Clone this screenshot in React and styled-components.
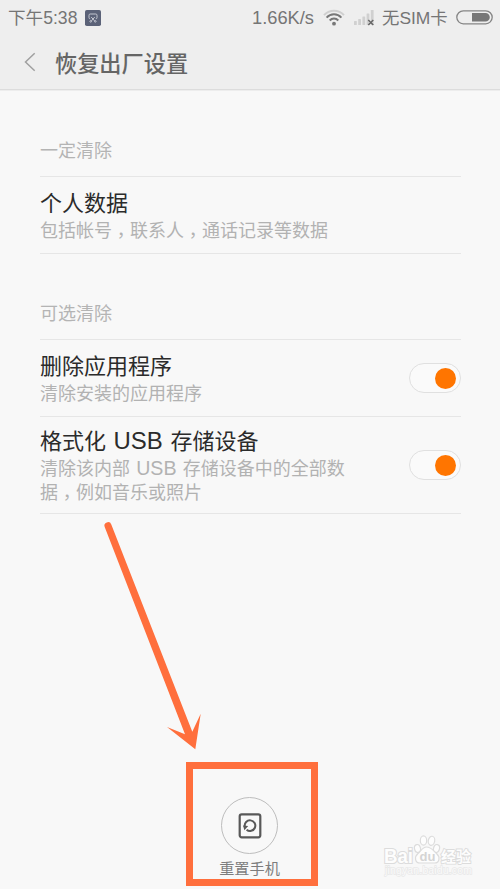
import React from "react";
import styled, { createGlobalStyle } from "styled-components";

const sections = [
	{
		label: "一定清除",
		items: [{ title: ["个人数据"], text: ["包括帐号", "，", "联系人", "，", "通话记录等数据"] }],
	},
	{
		label: "可选清除",
		items: [
			{ title: ["删除应用程序"], text: ["清除安装的应用程序"], toggle: true },
			{
				title: ["格式化 ", "USB", " 存储设备"],
				text: ["清除该内部 ", "USB", " 存储设备中的全部数", "据", "，", "例如音乐或照片"],
				toggle: true,
			},
		],
	},
];

function StatusBar() {
	return (
		<StatusStyles>
			<span className="time">下午5:38</span>
			<svg className="app" width="16" height="16" viewBox="0 0 16 16">
				<rect width="16" height="16" rx="1.800" fill="#5b6278" />
				<g fill="none" stroke="#c3c6d0" strokeWidth="1">
					<path d="M5.200 8.800A1.200 1.200 0 0 1 4 7.600V5.200A1.200 1.200 0 0 1 5.200 4h5.600A1.200 1.200 0 0 1 12 5.200v2.400a1.200 1.200 0 0 1-1.200 1.200" />
					<path d="M6.200 7l3.400 3.900M9.800 7l-3.400 3.900" />
					<circle cx="5.700" cy="11.400" r=".8" />
					<circle cx="10.300" cy="11.400" r=".8" />
				</g>
			</svg>
			<span className="speed">1.66K/s</span>
			<svg className="wifi" width="22" height="18" viewBox="0 0 22 18">
				<g fill="none" strokeWidth="1.900">
					<path d="M1 6.100C6.300 .2 15.700 .2 21 6.100" stroke="#cfcfcf" />
					<path d="M3.600 8.600C7.700 4.100 14.300 4.100 18.400 8.600" stroke="#777" />
					<path d="M6.700 11.500C9.100 8.900 12.900 8.900 15.300 11.500" stroke="#777" />
				</g>
				<circle cx="11" cy="14.700" r="1.900" fill="#777" />
			</svg>
			<svg className="signal" width="21" height="17" viewBox="0 0 21 17">
				<g fill="#d0d0d0">
					<rect x="0" y="12" width="2.800" height="4" rx=".6" />
					<rect x="4.200" y="10" width="2.800" height="6" rx=".6" />
					<rect x="8.400" y="7.500" width="2.800" height="8.500" rx=".6" />
					<rect x="12.600" y="4.500" width="2.800" height="11.500" rx=".6" />
					<rect x="16.800" y="1" width="2.800" height="15" rx=".6" />
				</g>
				<path d="M14.300 11l5 5M19.300 11l-5 5" stroke="#666" strokeWidth="1.500" />
			</svg>
			<span className="sim">无SIM卡</span>
			<svg className="battery" width="37" height="15" viewBox="0 0 37 15">
				<rect x=".8" y=".8" width="35.400" height="13" rx="6.500" fill="none" stroke="#858585" strokeWidth="1.300" />
				<path d="M16 3h13.500a4.300 4.300 0 0 1 0 8.600H16z" fill="#777" />
			</svg>
		</StatusStyles>
	);
}

// Latin words and commas sit a little differently from the Chinese text
function Mixed({ parts }) {
	return parts.map((part, i) => {
		if (part === "USB") return <Latin key={i}>{part}</Latin>;
		if (part === "，") return <Comma key={i}>{part}</Comma>;
		return <React.Fragment key={i}>{part}</React.Fragment>;
	});
}

function Item({ title, text, toggle }) {
	return (
		<ItemStyles>
			<div className="copy">
				<h2>
					<Mixed parts={title} />
				</h2>
				<p>
					<Mixed parts={text} />
				</p>
			</div>
			{toggle && (
				<Toggle role="switch" aria-checked="true">
					<span />
				</Toggle>
			)}
		</ItemStyles>
	);
}

function Watermark() {
	return (
		<WatermarkStyles>
			<svg width="92" height="46" viewBox="0 0 92 46">
				<g fill="#fdfdfd" stroke="#dcdcdc" strokeWidth="1.200">
					<ellipse cx="34.500" cy="15.500" rx="3" ry="4" transform="rotate(-12 34.500 15.500)" />
					<ellipse cx="40.500" cy="7.500" rx="3.200" ry="4.600" />
					<ellipse cx="48.500" cy="7.800" rx="3.200" ry="4.600" transform="rotate(10 48.500 7.800)" />
					<ellipse cx="53.500" cy="15.500" rx="3" ry="4" transform="rotate(14 53.500 15.500)" />
					<path d="M43.500 14c-4 0-5.500 4-8.500 6.500-4 3.500-3 9.500 2 9.500h14.500c5 0 6-6 2-9.500-3-2.500-5-6.500-10-6.500z" />
				</g>
				<g fontFamily="'Liberation Sans', 'Noto Sans CJK SC', sans-serif" fontWeight="700" paintOrder="stroke" strokeWidth="2.200" stroke="#dcdcdc" fill="#fdfdfd">
					<text x="1" y="29.500" fontSize="20" textLength="29" lengthAdjust="spacingAndGlyphs">Bai</text>
					<text x="36.500" y="28" fontSize="13" stroke="none" fill="#d4d4d4">du</text>
					<text x="58" y="28.500" fontSize="15" textLength="30" strokeWidth="1.800">经验</text>
				</g>
				<text x="2" y="41" fontFamily="'Liberation Sans', sans-serif" fontSize="10.500" textLength="87" fill="#fafafa" stroke="#e8e8e8" strokeWidth="1.400" paintOrder="stroke">
					jingyan.baidu.com
				</text>
			</svg>
		</WatermarkStyles>
	);
}

export default function App() {
	return (
		<Screen>
			<GlobalStyle />
			<Header>
				<StatusBar />
				<div className="title">
					<svg width="12" height="20" viewBox="0 0 12 20">
						<path d="M10.700 1.200L1.500 10l9.200 8.800" fill="none" stroke="#a0a0a0" strokeWidth="1.500" />
					</svg>
					<h1>恢复出厂设置</h1>
				</div>
			</Header>
			<main>
				{sections.map((section) => (
					<Section key={section.label}>
						<h3>{section.label}</h3>
						{section.items.map((item) => (
							<Item key={item.title[0]} {...item} />
						))}
					</Section>
				))}
			</main>
			<Footer>
				<ResetButton>
					<span className="circle">
						<svg width="24" height="26" viewBox="0 0 24 26">
							<rect x="1.700" y="1.300" width="20.600" height="23" rx="2" fill="none" stroke="#585858" strokeWidth="2.200" />
							<path d="M8.600 16.700A5.300 5.300 0 1 0 6.800 13.600" fill="none" stroke="#585858" strokeWidth="2" />
							<path d="M5 12.500l5.200.5-3.800 4.200z" fill="#585858" />
						</svg>
					</span>
					重置手机
				</ResetButton>
			</Footer>
			<Watermark />
			<Marker />
			<Arrow width="101" height="230" viewBox="0 0 101 230">
				<path d="M4.700 7a3.500 3.500 0 0 1 6.600-2.500l81 207.200 8.400-18-5.400 35.600L67 207l18 7.300z" />
			</Arrow>
		</Screen>
	);
}

const GlobalStyle = createGlobalStyle`
	* {
		box-sizing: border-box;
	}

	body {
		margin: 0;
		background: #f8f8f8;
		font-family: "Liberation Sans", "Noto Sans CJK SC", sans-serif;
	}

	h1, h2, h3, p {
		margin: 0;
		font-weight: 400;
	}

	svg {
		display: block;
		flex: none;
	}
`;

const Screen = styled.div`
	position: relative;
	display: flex;
	flex-direction: column;
	height: 889px;
	overflow: hidden;
	background: #f8f8f8;
`;

const Header = styled.header`
	height: 90px;
	margin-bottom: 1px;
	background: #eee;
	border-bottom: 1px solid #dcdcdc;
	box-shadow: 0 1px #ededed;

	.title {
		display: flex;
		align-items: center;
		height: 54px;
		padding-left: 24px;
	}

	h1 {
		margin-left: 19px;
		padding-top: 5px;
		font-size: 22.2px;
		font-weight: 500;
		line-height: 32px;
		color: #656565;
	}
`;

const StatusStyles = styled.div`
	display: flex;
	align-items: center;
	height: 35px;
	padding: 0 7px 0 8px;
	font-size: 18px;
	line-height: 26px;
	white-space: nowrap;
	color: #757575;

	.time {
		width: 70px;
		padding-top: 1px;
		font-size: 17.6px;
	}

	.app {
		margin-left: 7px;
	}

	.speed {
		margin-left: auto;
		padding-top: 1px;
		font-size: 18.3px;
	}

	.wifi {
		margin-left: 9px;
	}

	.signal {
		margin-left: 9px;
	}

	.sim {
		width: 67px;
		margin-left: 7px;
		padding-top: 1px;
		font-size: 17.4px;
	}

	.battery {
		margin-left: 7px;
	}
`;

const Section = styled.section`
	margin: 0 39px 0 40px;

	h3 {
		height: 86px;
		padding: 48px 0 0;
		font-size: 18px;
		line-height: 24px;
		color: #b4b4b4;
		border-bottom: 1px solid #e6e6e6;
	}
`;

const ItemStyles = styled.div`
	display: flex;
	align-items: center;
	justify-content: space-between;
	min-height: 77px;
	padding: 11px 0 8px;
	border-bottom: 1px solid #e6e6e6;

	.copy {
		width: 310px;
	}

	h2 {
		font-size: 22px;
		line-height: 28px;
		color: #2b2b2b;
	}

	p {
		margin-top: 1px;
		font-size: 18px;
		line-height: 24px;
		color: #b2b2b2;
	}
`;

const Latin = styled.span`
	margin: 0 0.06em;
	font-size: 1.09em;
	line-height: 1;
`;

const Comma = styled.span`
	font-family: "Noto Sans CJK TC", sans-serif;
	line-height: 0;
	vertical-align: -5px;
`;

const Toggle = styled.div`
	display: flex;
	align-items: center;
	justify-content: flex-end;
	width: 52px;
	height: 30px;
	margin-bottom: 3px;
	padding-right: 4px;
	border: 1px solid #e0e0e0;
	border-radius: 15px;
	background: #fafafa;

	span {
		width: 21px;
		height: 21px;
		border-radius: 50%;
		background: #ff7500;
	}
`;

const Footer = styled.footer`
	display: flex;
	justify-content: center;
	margin-top: auto;
	padding: 0 1px 10px 0;
`;

const ResetButton = styled.button`
	display: flex;
	flex-direction: column;
	align-items: center;
	padding: 0;
	border: 0;
	background: none;
	font: 15.2px/24px "Noto Sans CJK SC", sans-serif;
	color: #7d7d7d;

	.circle {
		display: flex;
		align-items: center;
		justify-content: center;
		width: 57px;
		height: 57px;
		margin-bottom: 1px;
		border: 1px solid #bdbdbd;
		border-radius: 50%;
	}
`;

/* Overlays drawn on top of the screen */
const Marker = styled.div`
	position: absolute;
	left: 186px;
	top: 762px;
	width: 132px;
	height: 124px;
	border: 7px solid #ff6f3d;
`;

const Arrow = styled.svg`
	position: absolute;
	left: 100px;
	top: 520px;
	fill: #ff6f3d;
`;

const WatermarkStyles = styled.div`
	position: absolute;
	left: 383px;
	top: 833px;
`;
